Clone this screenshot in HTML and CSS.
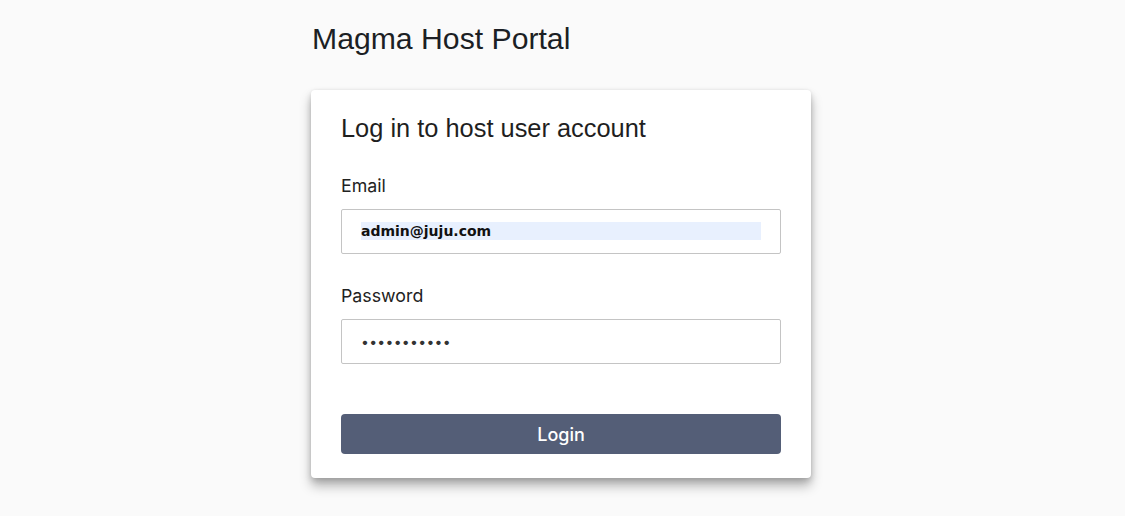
FILE: index.html
```html
<!DOCTYPE html>
<html lang="en">
<head>
<meta charset="utf-8">
<title>Magma Host Portal</title>
<link rel="stylesheet" href="styles.css">
</head>
<body>
<main class="page">
  <h1 class="portal-title">Magma Host Portal</h1>
  <form class="card">
    <h2 class="card-title">Log in to host user account</h2>
    <label class="field-label" for="email">Email</label>
    <input class="field-input field-autofill" id="email" type="email" value="admin@juju.com">
    <label class="field-label field-label-spaced" for="password">Password</label>
    <input class="field-input field-password" id="password" type="password" value="abcdefghijk">
    <button class="login-button" type="button">Login</button>
  </form>
</main>
</body>
</html>
```

FILE: styles.css
```css
html, body {
  margin: 0;
  padding: 0;
  background: #fafafa;
}

body {
  font-family: "Liberation Sans", Arial, sans-serif;
  color: #1f1f1f;
  min-height: 516px;
}

.page {
  width: 500px;
  margin-left: calc(50% - 251.5px);
  padding-top: 22px;
  padding-bottom: 38px;
  display: flex;
  flex-direction: column;
}

.portal-title {
  margin: 0 0 34px 1px;
  font-family: "Liberation Sans", Arial, sans-serif;
  font-weight: 400;
  font-size: 30.2px;
  line-height: 34px;
  color: #1c1f24;
}

.card {
  background: #ffffff;
  border-radius: 4px;
  box-shadow: 0 8px 12px rgba(0, 0, 0, 0.28), 0 3px 6px rgba(0, 0, 0, 0.14), 0 0 3px rgba(0, 0, 0, 0.06);
  padding: 24px 30px 24px 30px;
  display: flex;
  flex-direction: column;
}

.card-title {
  margin: 0 0 33px 0;
  font-family: "Liberation Sans", Arial, sans-serif;
  font-weight: 400;
  font-size: 25.4px;
  line-height: 29px;
  color: #1f1f1f;
}

.field-label {
  font-family: Inter, "Noto Sans", sans-serif;
  font-size: 17.8px;
  line-height: 20px;
  color: #222222;
  margin-bottom: 13px;
}

.field-label-spaced {
  margin-top: 32px;
}

.field-input {
  box-sizing: border-box;
  width: 100%;
  height: 45px;
  margin: 0;
  padding: 12px 19px 13px 19px;
  border: 1px solid #c4c4c4;
  border-radius: 2px;
  font-size: 14px;
  color: #111;
  outline: none;
}

.field-autofill {
  background-color: #e8f0fe;
  background-clip: content-box;
  font-family: "DejaVu Sans", sans-serif;
  font-weight: 700;
}

.field-password {
  background: #ffffff;
  font-family: Inter, "Noto Sans", sans-serif;
  letter-spacing: 0.3px;
  color: #333;
}

.login-button {
  margin-top: 50px;
  height: 40px;
  width: 100%;
  border: none;
  border-radius: 4px;
  background: #545e77;
  color: #ffffff;
  font-family: Inter, "Noto Sans", sans-serif;
  font-size: 18px;
  font-weight: 500;
  cursor: pointer;
}
```
